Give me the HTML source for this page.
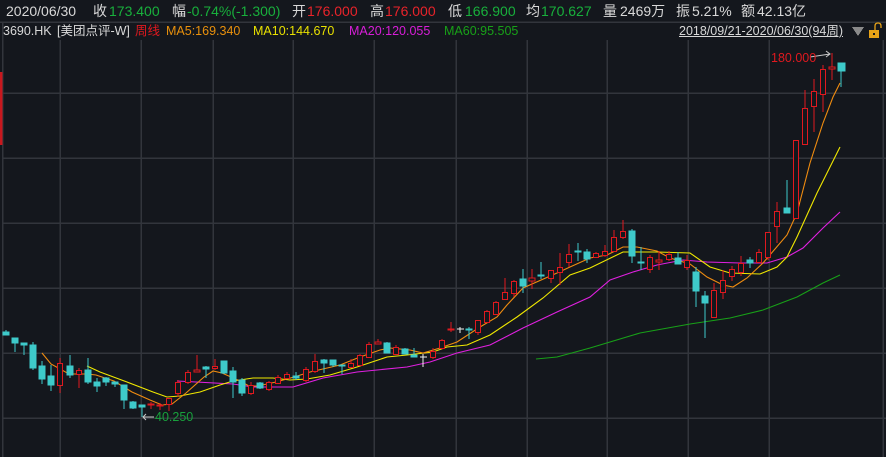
<!DOCTYPE html>
<html><head><meta charset="utf-8"><style>
*{margin:0;padding:0}
body{width:886px;height:457px;background:#14171d;overflow:hidden;position:relative;font-family:"Liberation Sans","Noto Sans CJK SC",sans-serif}
.t{position:absolute;white-space:nowrap;font-size:14px;line-height:15px}
.s{position:absolute;white-space:nowrap;font-size:12.5px;line-height:13px}
.w{color:#d8d8d8}.g{color:#18b03c}.r{color:#e8232a}
svg{position:absolute;left:0;top:0}
</style></head><body>
<svg width="886" height="457" shape-rendering="crispEdges">
<g stroke="#32353c" stroke-width="1.5">
<line x1="0" y1="22" x2="886" y2="22"/>
<line x1="2.5" y1="22" x2="2.5" y2="457"/>
<line x1="60" y1="40" x2="60" y2="457"/><line x1="141" y1="40" x2="141" y2="457"/><line x1="213" y1="40" x2="213" y2="457"/><line x1="293" y1="40" x2="293" y2="457"/><line x1="374" y1="40" x2="374" y2="457"/><line x1="456" y1="40" x2="456" y2="457"/><line x1="527" y1="40" x2="527" y2="457"/><line x1="607" y1="40" x2="607" y2="457"/><line x1="688" y1="40" x2="688" y2="457"/><line x1="769" y1="40" x2="769" y2="457"/><line x1="883" y1="40" x2="883" y2="457"/>
<line x1="2" y1="93" x2="886" y2="93"/><line x1="2" y1="158" x2="886" y2="158"/><line x1="2" y1="223" x2="886" y2="223"/><line x1="2" y1="288" x2="886" y2="288"/><line x1="2" y1="353" x2="886" y2="353"/><line x1="2" y1="418" x2="886" y2="418"/>
</g>
<rect x="0" y="72" width="2.5" height="73" fill="#c8181e"/>
<g fill="none" stroke-width="1.1" shape-rendering="auto">
<polyline stroke="#18a018" points="536,359 557,357 590,348 640,333 690,324 730,318 763,310 797,297 823,283 840,275"/>
<polyline stroke="#e020e0" points="177,381 233,384 253,387 293,387 323,378 357,372 407,367 430,362 457,353 490,345 523,328 557,312 590,297 610,280 633,272 657,265 683,260 707,262 740,263 767,263 787,257 803,248 823,228 840,212"/>
<polyline stroke="#f0e800" points="87,366 100,372 127,382 153,392 167,397 180,396 200,392 220,385 233,381 253,378 273,378 290,380 307,379 330,375 357,367 387,357 407,355 433,352 447,347 467,345 490,335 517,317 543,298 570,275 590,268 623,252 637,252 657,252 690,253 710,267 730,273 760,274 777,267 787,257 797,237 817,193 840,147"/>
<polyline stroke="#f08c10" points="42,353 51,364 69,374 87,374 96,375 114,381 132,392 150,400 162,405 172,404 186,393 204,377 213,371 222,373 240,381 249,386 258,386 276,382 294,377 310,372 340,365 360,357 380,350 390,348 410,350 423,353 440,348 457,342 480,327 497,317 507,305 523,288 557,273 570,267 590,258 607,255 623,247 637,247 657,251 670,258 690,264 707,277 723,285 733,287 747,278 763,263 787,235 797,213 810,163 823,123 833,97 840,83"/>
</g>
<g fill="#3ecaca" stroke="#3ecaca">
<line x1="6" y1="330" x2="6" y2="335"/><rect x="3" y="332" width="6" height="3"/>
<line x1="15" y1="338" x2="15" y2="352"/><rect x="12" y="338" width="6" height="5"/>
<line x1="24" y1="343" x2="24" y2="355"/><rect x="21" y="343" width="6" height="2"/>
<line x1="33" y1="342" x2="33" y2="370"/><rect x="30" y="345" width="6" height="23"/>
<line x1="42" y1="361" x2="42" y2="384"/><rect x="39" y="366" width="6" height="13"/>
<line x1="51" y1="365" x2="51" y2="391"/><rect x="48" y="376" width="6" height="9"/>
<line x1="70" y1="355" x2="70" y2="378"/><rect x="67" y="366" width="6" height="9"/>
<line x1="88" y1="358" x2="88" y2="384"/><rect x="85" y="370" width="6" height="12"/>
<line x1="97" y1="378" x2="97" y2="392"/><rect x="94" y="382" width="6" height="4"/>
<line x1="106" y1="377" x2="106" y2="386"/><rect x="103" y="378" width="6" height="4"/>
<line x1="115" y1="382" x2="115" y2="387"/><rect x="112" y="382" width="6" height="2"/>
<line x1="124" y1="385" x2="124" y2="409"/><rect x="121" y="385" width="6" height="15"/>
<line x1="133" y1="401" x2="133" y2="409"/><rect x="130" y="402" width="6" height="6"/>
<line x1="142" y1="405" x2="142" y2="417"/><rect x="139" y="405" width="6" height="2"/>
<line x1="206" y1="366" x2="206" y2="378"/><rect x="203" y="367" width="6" height="2"/>
<line x1="224" y1="361" x2="224" y2="374"/><rect x="221" y="361" width="6" height="12"/>
<line x1="233" y1="367" x2="233" y2="398"/><rect x="230" y="371" width="6" height="11"/>
<line x1="242" y1="378" x2="242" y2="396"/><rect x="239" y="380" width="6" height="13"/>
<line x1="260" y1="382" x2="260" y2="389"/><rect x="257" y="383" width="6" height="5"/>
<line x1="296" y1="372" x2="296" y2="380"/><rect x="293" y="376" width="6" height="2"/>
<line x1="324" y1="359" x2="324" y2="373"/><rect x="321" y="360" width="6" height="3"/>
<line x1="333" y1="360" x2="333" y2="367"/><rect x="330" y="360" width="6" height="5"/>
<line x1="342" y1="365" x2="342" y2="374"/><rect x="339" y="365" width="6" height="1"/>
<line x1="387" y1="342" x2="387" y2="353"/><rect x="384" y="343" width="6" height="10"/>
<line x1="405" y1="348" x2="405" y2="354"/><rect x="402" y="349" width="6" height="5"/>
<line x1="414" y1="348" x2="414" y2="357"/><rect x="411" y="355" width="6" height="2"/>
<line x1="469" y1="327" x2="469" y2="339"/><rect x="466" y="329" width="6" height="1"/>
<line x1="523" y1="269" x2="523" y2="293"/><rect x="520" y="279" width="6" height="7"/>
<line x1="541" y1="262" x2="541" y2="279"/><rect x="538" y="275" width="6" height="1"/>
<line x1="578" y1="243" x2="578" y2="261"/><rect x="575" y="251" width="6" height="1"/>
<line x1="587" y1="249" x2="587" y2="263"/><rect x="584" y="252" width="6" height="7"/>
<line x1="632" y1="229" x2="632" y2="263"/><rect x="629" y="231" width="6" height="25"/>
<line x1="641" y1="247" x2="641" y2="270"/><rect x="638" y="262" width="6" height="1"/>
<line x1="678" y1="252" x2="678" y2="264"/><rect x="675" y="258" width="6" height="6"/>
<line x1="696" y1="267" x2="696" y2="307"/><rect x="693" y="272" width="6" height="19"/>
<line x1="705" y1="291" x2="705" y2="338"/><rect x="702" y="296" width="6" height="7"/>
<line x1="750" y1="257" x2="750" y2="268"/><rect x="747" y="260" width="6" height="3"/>
<line x1="787" y1="180" x2="787" y2="213"/><rect x="784" y="208" width="6" height="5"/>
<line x1="841" y1="63" x2="841" y2="87"/><rect x="838" y="63" width="7" height="8"/>
</g>
<g stroke="#e0191f" fill="#14171d">
<line x1="60" y1="358" x2="60" y2="393"/><rect x="57.5" y="363.5" width="5" height="22"/>
<line x1="79" y1="368" x2="79" y2="388"/><rect x="76.5" y="370.5" width="5" height="4"/>
<line x1="151" y1="402" x2="151" y2="409"/><rect x="148" y="404" width="6" height="1"/>
<line x1="160" y1="403" x2="160" y2="410"/><rect x="157" y="405" width="6" height="1"/>
<line x1="169" y1="398" x2="169" y2="411"/><rect x="166.5" y="398.5" width="5" height="6"/>
<line x1="178" y1="380" x2="178" y2="397"/><rect x="175.5" y="382.5" width="5" height="11"/>
<line x1="188" y1="370" x2="188" y2="384"/><rect x="185.5" y="372.5" width="5" height="10"/>
<line x1="197" y1="355" x2="197" y2="372"/><rect x="194" y="370" width="6" height="2"/>
<line x1="215" y1="359" x2="215" y2="370"/><rect x="212.5" y="366.5" width="5" height="2"/>
<line x1="251" y1="382" x2="251" y2="395"/><rect x="248.5" y="385.5" width="5" height="8"/>
<line x1="269" y1="381" x2="269" y2="391"/><rect x="266.5" y="382.5" width="5" height="7"/>
<line x1="278" y1="375" x2="278" y2="384"/><rect x="275.5" y="377.5" width="5" height="6"/>
<line x1="287" y1="372" x2="287" y2="379"/><rect x="284.5" y="374.5" width="5" height="4"/>
<line x1="306" y1="367" x2="306" y2="382"/><rect x="303.5" y="369.5" width="5" height="11"/>
<line x1="315" y1="354" x2="315" y2="373"/><rect x="312.5" y="361.5" width="5" height="10"/>
<line x1="351" y1="359" x2="351" y2="367"/><rect x="348.5" y="363.5" width="5" height="4"/>
<line x1="360" y1="354" x2="360" y2="365"/><rect x="357.5" y="355.5" width="5" height="10"/>
<line x1="369" y1="342" x2="369" y2="357"/><rect x="366.5" y="344.5" width="5" height="13"/>
<line x1="378" y1="339" x2="378" y2="344"/><rect x="375" y="342" width="6" height="2"/>
<line x1="396" y1="345" x2="396" y2="355"/><rect x="393.5" y="347.5" width="5" height="7"/>
<line x1="433" y1="348" x2="433" y2="359"/><rect x="430.5" y="351.5" width="5" height="6"/>
<line x1="442" y1="339" x2="442" y2="348"/><rect x="439.5" y="340.5" width="5" height="8"/>
<line x1="451" y1="322" x2="451" y2="332"/><rect x="448" y="329" width="6" height="1"/>
<line x1="478" y1="320" x2="478" y2="335"/><rect x="475.5" y="320.5" width="5" height="12"/>
<line x1="487" y1="310" x2="487" y2="322"/><rect x="484.5" y="311.5" width="5" height="11"/>
<line x1="496" y1="301" x2="496" y2="314"/><rect x="493.5" y="302.5" width="5" height="12"/>
<line x1="505" y1="278" x2="505" y2="299"/><rect x="502.5" y="292.5" width="5" height="7"/>
<line x1="514" y1="280" x2="514" y2="297"/><rect x="511.5" y="281.5" width="5" height="12"/>
<line x1="532" y1="269" x2="532" y2="289"/><rect x="529" y="278" width="6" height="3"/>
<line x1="551" y1="270" x2="551" y2="283"/><rect x="548.5" y="270.5" width="5" height="8"/>
<line x1="560" y1="253" x2="560" y2="285"/><rect x="557.5" y="267.5" width="5" height="5"/>
<line x1="569" y1="244" x2="569" y2="267"/><rect x="566.5" y="254.5" width="5" height="8"/>
<line x1="596" y1="252" x2="596" y2="258"/><rect x="593.5" y="253.5" width="5" height="4"/>
<line x1="605" y1="245" x2="605" y2="257"/><rect x="602.5" y="251.5" width="5" height="4"/>
<line x1="614" y1="230" x2="614" y2="251"/><rect x="611.5" y="237.5" width="5" height="14"/>
<line x1="623" y1="220" x2="623" y2="239"/><rect x="620.5" y="231.5" width="5" height="6"/>
<line x1="650" y1="255" x2="650" y2="273"/><rect x="647.5" y="257.5" width="5" height="12"/>
<line x1="659" y1="251" x2="659" y2="270"/><rect x="656" y="260" width="6" height="2"/>
<line x1="669" y1="251" x2="669" y2="261"/><rect x="666.5" y="254.5" width="5" height="5"/>
<line x1="687" y1="255" x2="687" y2="270"/><rect x="684.5" y="260.5" width="5" height="7"/>
<line x1="714" y1="283" x2="714" y2="317"/><rect x="711.5" y="290.5" width="5" height="27"/>
<line x1="723" y1="270" x2="723" y2="299"/><rect x="720.5" y="280.5" width="5" height="12"/>
<line x1="732" y1="266" x2="732" y2="281"/><rect x="729.5" y="269.5" width="5" height="7"/>
<line x1="741" y1="256" x2="741" y2="276"/><rect x="738.5" y="263.5" width="5" height="9"/>
<line x1="759" y1="249" x2="759" y2="263"/><rect x="756.5" y="252.5" width="5" height="10"/>
<line x1="768" y1="232" x2="768" y2="260"/><rect x="765.5" y="232.5" width="5" height="25"/>
<line x1="777" y1="202" x2="777" y2="243"/><rect x="774.5" y="211.5" width="5" height="15"/>
<line x1="796" y1="140" x2="796" y2="218"/><rect x="793.5" y="140.5" width="5" height="78"/>
<line x1="805" y1="90" x2="805" y2="144"/><rect x="802.5" y="108.5" width="5" height="36"/>
<line x1="814" y1="79" x2="814" y2="132"/><rect x="811.5" y="91.5" width="5" height="15"/>
<line x1="823" y1="65" x2="823" y2="112"/><rect x="820.5" y="69.5" width="5" height="25"/>
<line x1="832" y1="53" x2="832" y2="80"/><rect x="829" y="67" width="6" height="2"/>
</g>
<g stroke="#f0f0f0"><line x1="423" y1="354" x2="423" y2="367"/><line x1="420" y1="357" x2="427" y2="357"/><line x1="460" y1="327" x2="460" y2="333"/><line x1="457" y1="329" x2="464" y2="329"/></g>
<g stroke="#c8c8c8" fill="none" shape-rendering="auto"><path d="M143 417H154M146 414L143 417L146 420"/><path d="M810 57L830 54M826 51L830 54L826 57"/></g>
<polygon points="852,27 864,27 858,36" fill="#8a8a8a"/>
<rect x="869" y="30" width="10" height="8" fill="#e8a317"/><rect x="873" y="33" width="2" height="2" fill="#14171d"/>
<path d="M875 30V26Q875 23 878 23Q881 23 881 26V28" stroke="#e8a317" fill="none" stroke-width="1.3" shape-rendering="auto"/>
</svg>
<div class="t w" style="left:6px;top:4px">2020/06/30</div>
<div class="t w" style="left:93px;top:4px">收</div><div class="t g" style="left:109px;top:4px">173.400</div>
<div class="t w" style="left:172px;top:4px">幅</div><div class="t g" style="left:187px;top:4px">-0.74%(-1.300)</div>
<div class="t w" style="left:292px;top:4px">开</div><div class="t r" style="left:307px;top:4px">176.000</div>
<div class="t w" style="left:370px;top:4px">高</div><div class="t r" style="left:385px;top:4px">176.000</div>
<div class="t w" style="left:448px;top:4px">低</div><div class="t g" style="left:465px;top:4px">166.900</div>
<div class="t w" style="left:526px;top:4px">均</div><div class="t g" style="left:541px;top:4px">170.627</div>
<div class="t w" style="left:603px;top:4px">量</div><div class="t w" style="left:620px;top:4px">2469万</div>
<div class="t w" style="left:676px;top:4px">振</div><div class="t w" style="left:692px;top:4px">5.21%</div>
<div class="t w" style="left:741px;top:4px">额</div><div class="t w" style="left:757px;top:4px">42.13亿</div>
<div class="s w" style="left:3px;top:25px">3690.HK</div>
<div class="s w" style="left:57px;top:25px">[美团点评-W]</div>
<div class="s" style="left:135px;top:25px;color:#e0191f">周线</div>
<div class="s" style="left:166px;top:25px;color:#e8900c">MA5:169.340</div>
<div class="s" style="left:253px;top:25px;color:#e8e000">MA10:144.670</div>
<div class="s" style="left:349px;top:25px;color:#d81ed8">MA20:120.055</div>
<div class="s" style="left:444px;top:25px;color:#18a018">MA60:95.505</div>
<div class="s w" style="left:679px;top:25px;text-decoration:underline">2018/09/21-2020/06/30(94周)</div>
<div class="s" style="left:155px;top:411px;color:#18a03c">40.250</div>
<div class="s" style="left:771px;top:52px;color:#e0191f">180.000</div>
</body></html>
